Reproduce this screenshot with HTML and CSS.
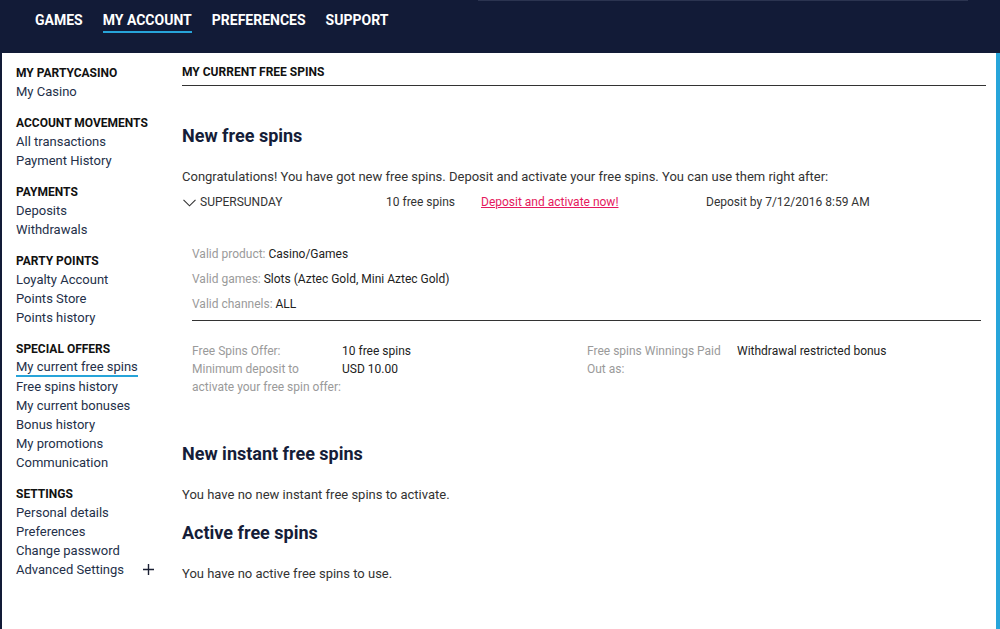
FILE: index.html
```html
<!DOCTYPE html>
<html lang="en">
<head>
<meta charset="utf-8">
<title>My current free spins</title>
<link rel="stylesheet" href="styles.css">
</head>
<body>
<header class="topbar">
  <nav class="mainnav">
    <a href="#">GAMES</a>
    <a href="#" class="active">MY ACCOUNT</a>
    <a href="#">PREFERENCES</a>
    <a href="#">SUPPORT</a>
  </nav>
</header>
<div class="page">
  <aside class="sidebar">
    <div class="group">
      <h3>MY PARTYCASINO</h3>
      <a href="#">My Casino</a>
    </div>
    <div class="group">
      <h3>ACCOUNT MOVEMENTS</h3>
      <a href="#">All transactions</a>
      <a href="#">Payment History</a>
    </div>
    <div class="group">
      <h3>PAYMENTS</h3>
      <a href="#">Deposits</a>
      <a href="#">Withdrawals</a>
    </div>
    <div class="group">
      <h3>PARTY POINTS</h3>
      <a href="#">Loyalty Account</a>
      <a href="#">Points Store</a>
      <a href="#">Points history</a>
    </div>
    <div class="group">
      <h3>SPECIAL OFFERS</h3>
      <a href="#" class="current">My current free spins</a>
      <a href="#">Free spins history</a>
      <a href="#">My current bonuses</a>
      <a href="#">Bonus history</a>
      <a href="#">My promotions</a>
      <a href="#">Communication</a>
    </div>
    <div class="group">
      <h3>SETTINGS</h3>
      <a href="#">Personal details</a>
      <a href="#">Preferences</a>
      <a href="#">Change password</a>
      <a href="#" class="expand">Advanced Settings
        <svg class="plus" width="11" height="11" viewBox="0 0 11 11"><path d="M5.5 0v11M0 5.5h11" stroke="#1a1f33" stroke-width="1.4" fill="none"/></svg>
      </a>
    </div>
  </aside>

  <main class="content">
    <h1 class="pagetitle">MY CURRENT FREE SPINS</h1>

    <h2 class="section first">New free spins</h2>
    <p class="intro">Congratulations! You have got new free spins. Deposit and activate your free spins. You can use them right after:</p>

    <div class="offer-row">
      <span class="offer-name">
        <svg class="chev" width="13" height="8" viewBox="0 0 13 8"><path d="M0.5 0.8l6 6 6-6" stroke="#333" stroke-width="1.1" fill="none"/></svg>
        SUPERSUNDAY
      </span>
      <span>10 free spins</span>
      <a href="#" class="cta">Deposit and activate now!</a>
      <span>Deposit by 7/12/2016 8:59 AM</span>
    </div>

    <div class="details">
      <p><span class="lbl">Valid product:</span> Casino/Games</p>
      <p><span class="lbl">Valid games:</span> Slots (Aztec Gold, Mini Aztec Gold)</p>
      <p><span class="lbl">Valid channels:</span> ALL</p>
    </div>

    <dl class="terms">
      <div class="term-col">
        <dt>Free Spins Offer:</dt><dd>10 free spins</dd>
        <dt>Minimum deposit to activate your free spin offer:</dt><dd>USD 10.00</dd>
      </div>
      <div class="term-col">
        <dt>Free spins Winnings Paid Out as:</dt><dd>Withdrawal restricted bonus</dd>
      </div>
    </dl>

    <h2 class="section">New instant free spins</h2>
    <p class="note">You have no new instant free spins to activate.</p>

    <h2 class="section tight">Active free spins</h2>
    <p class="note">You have no active free spins to use.</p>
  </main>
</div>
</body>
</html>
```

FILE: styles.css
```css
* {
  box-sizing: border-box;
}

html, body {
  margin: 0;
  padding: 0;
  height: 100%;
  overflow: hidden;
}

body {
  font-family: Roboto, "Liberation Sans", Arial, sans-serif;
  color: #333;
  background: #fff;
}

a {
  text-decoration: none;
  color: inherit;
}

/* top navigation bar */
.topbar {
  position: relative;
  height: 53px;
  background: #121b37;
}

.topbar::before {
  content: "";
  position: absolute;
  top: 0;
  left: 478px;
  width: 490px;
  height: 1px;
  background: #2b3450;
}

.mainnav {
  display: flex;
  gap: 20px;
  padding: 11px 0 0 35px;
}

.mainnav a {
  color: #fff;
  font-weight: 700;
  font-size: 14px;
  line-height: 18px;
  padding-bottom: 2px;
  border-bottom: 2px solid transparent;
}

.mainnav a.active {
  border-bottom-color: #27a4d9;
}

/* page body */
.page {
  display: flex;
  height: calc(100% - 53px);
  border-left: 2px solid #121b37;
  border-right: 4px solid #27a5da;
}

.sidebar {
  width: 180px;
  flex: none;
  padding: 10.5px 0 0 14px;
}

.group {
  display: flex;
  flex-direction: column;
  align-items: flex-start;
  margin-bottom: 13px;
}

.group h3 {
  margin: 0;
  font-size: 12px;
  font-weight: 700;
  line-height: 18px;
  color: #111;
}

.group a {
  font-size: 13px;
  line-height: 19px;
  color: #243049;
}

.group a.current {
  line-height: 17px;
  border-bottom: 2px solid #27a4d9;
}

.group a.expand {
  display: flex;
  align-items: center;
  gap: 19px;
}

.plus {
  display: block;
}

/* main column */
.content {
  flex: 1;
  padding: 10px 10px 0 0;
}

.pagetitle {
  margin: 0;
  font-size: 12px;
  font-weight: 700;
  line-height: 19px;
  color: #111;
  padding-bottom: 3px;
  border-bottom: 1px solid #333;
}

.section {
  margin: 46px 0 0;
  font-size: 18px;
  font-weight: 700;
  line-height: 24px;
  color: #151d38;
}

.section.first {
  margin-top: 38px;
}

.section.tight {
  margin-top: 17px;
}

.intro,
.note {
  margin: 19px 0 0;
  font-size: 13px;
  line-height: 19px;
}

.offer-row {
  display: grid;
  grid-template-columns: 204px 95px 225px auto;
  margin-top: 7px;
  font-size: 12px;
  line-height: 19px;
}

.offer-name {
  display: flex;
  align-items: center;
  gap: 4px;
  padding-left: 1px;
}

.chev {
  display: block;
}

.cta {
  color: #e5195e;
  text-decoration: underline;
}

.details {
  margin: 30px 5px 0 10px;
  padding-bottom: 3px;
  border-bottom: 1px solid #333;
  font-size: 12px;
}

.details p {
  margin: 0;
  line-height: 25px;
  color: #222;
}

.lbl {
  color: #9a9a9a;
}

.terms {
  display: grid;
  grid-template-columns: 395px auto;
  margin: 21px 5px 0 10px;
  font-size: 12px;
  line-height: 18px;
}

.term-col {
  display: grid;
  grid-template-columns: 150px auto;
  align-content: start;
}

.terms dt {
  color: #9a9a9a;
}

.terms dd {
  margin: 0;
  color: #222;
}
```
